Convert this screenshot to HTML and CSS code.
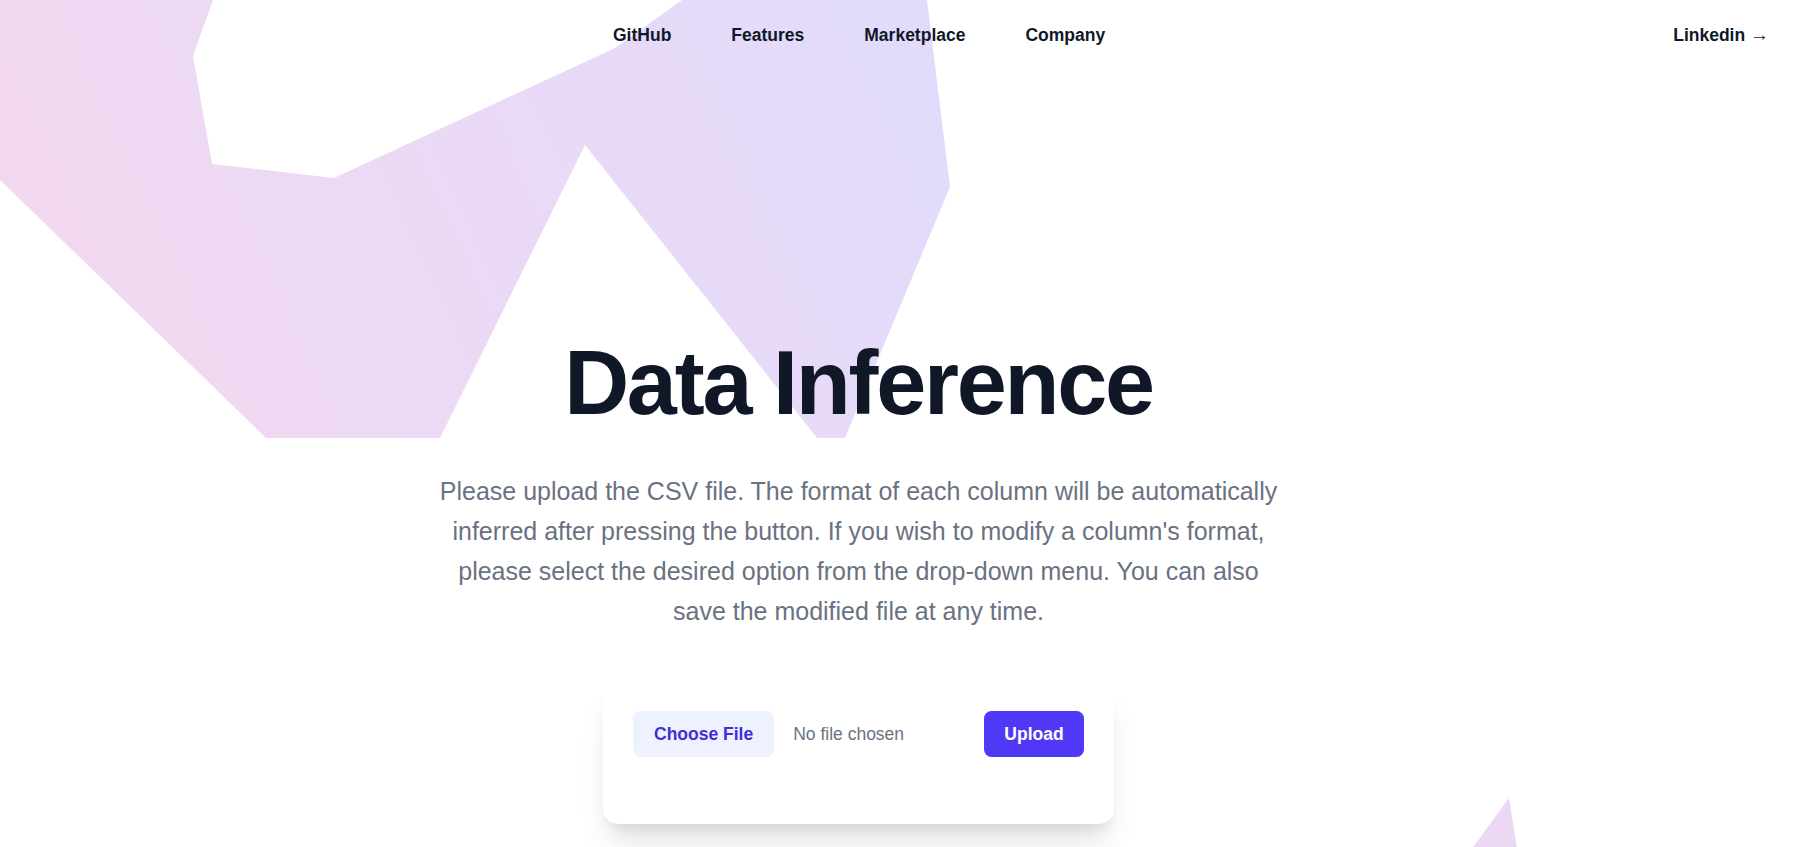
FILE: index.html
```html
<!DOCTYPE html>
<html lang="en">
<head>
<meta charset="utf-8">
<title>Data Inference</title>
<link rel="stylesheet" href="styles.css">
</head>
<body>
<div class="page">
  <svg class="bg" width="1793" height="847" viewBox="0 0 1793 847" aria-hidden="true">
    <defs>
      <linearGradient id="g1" gradientUnits="userSpaceOnUse" x1="0" y1="438" x2="950" y2="0">
        <stop offset="0" stop-color="#f4d8ee"/>
        <stop offset="1" stop-color="#e1dbfc"/>
      </linearGradient>
    </defs>
    <polygon fill="url(#g1)" points="0,0 213,0 193,56 212,164 334,178 615,48 682,0 927,0 950,187 845,438 817,438 585,145 440,438 266,438 0,180"/>
    <polygon fill="#ecd8f2" points="1509,798 1463,861 1519,861"/>
  </svg>

  <header class="nav">
    <nav class="nav-links">
      <a class="nav-link" href="#">GitHub</a>
      <a class="nav-link" href="#">Features</a>
      <a class="nav-link" href="#">Marketplace</a>
      <a class="nav-link" href="#">Company</a>
    </nav>
    <a class="nav-login" href="#">Linkedin <span class="arrow">&rarr;</span></a>
  </header>

  <main class="hero">
    <h1 class="title">Data Inference</h1>
    <p class="lead">Please upload the CSV file. The format of each column will be automatically inferred after pressing the button. If you wish to modify a column's format, please select the desired option from the drop-down menu. You can also save the modified file at any time.</p>
    <div class="card">
      <div class="upload-row">
        <label class="file-input">
          <span class="file-btn">Choose File</span>
          <span class="file-name">No file chosen</span>
        </label>
        <button class="upload-btn" type="button">Upload</button>
      </div>
    </div>
  </main>
</div>
</body>
</html>
```
FILE: styles.css
```css
* { box-sizing: border-box; }

html, body {
  margin: 0;
  padding: 0;
  background: #ffffff;
}

body {
  font-family: "Liberation Sans", Arial, sans-serif;
  color: #101828;
  overflow: hidden;
}

.page {
  position: relative;
  width: 1793px;
  height: 847px;
  overflow: hidden;
}

.bg {
  position: absolute;
  left: 0;
  top: 0;
  z-index: 0;
  display: block;
}

.nav {
  position: relative;
  z-index: 1;
  display: flex;
  align-items: center;
  height: 70px;
  padding: 0 24px 0 613px;
}

.nav-links {
  display: flex;
  gap: 60px;
}

.nav-link,
.nav-login {
  font-size: 17.5px;
  font-weight: 700;
  line-height: 30px;
  color: #101828;
  text-decoration: none;
}

.nav-login {
  margin-left: auto;
}

.arrow {
  font-weight: 400;
  font-family: "Liberation Sans", "DejaVu Sans", sans-serif;
  font-size: 19px;
}

.hero {
  position: relative;
  z-index: 1;
  display: flex;
  flex-direction: column;
  align-items: center;
  margin-right: 76px;
  padding-top: 268px;
}

.title {
  margin: 0;
  font-size: 90px;
  line-height: 90px;
  font-weight: 700;
  letter-spacing: -0.025em;
  color: #101828;
  text-align: center;
}

.lead {
  margin: 43px 0 0;
  max-width: 840px;
  font-size: 25px;
  line-height: 40px;
  color: #6a7282;
  text-align: center;
}

.card {
  margin-top: 50px;
  width: 511px;
  padding: 30px 30px 67px;
  background: #ffffff;
  border-radius: 15px;
  box-shadow: 0 25px 31px -6px rgba(0, 0, 0, 0.1), 0 10px 13px -7px rgba(0, 0, 0, 0.1);
}

.upload-row {
  display: flex;
  align-items: center;
  justify-content: space-between;
}

.file-input {
  display: flex;
  align-items: center;
  gap: 19px;
}

.file-btn {
  display: block;
  padding: 10px 21px;
  font-size: 17.5px;
  line-height: 26px;
  font-weight: 700;
  color: #432dd7;
  background: #eef2ff;
  border-radius: 7.5px;
}

.file-name {
  font-size: 17.5px;
  line-height: 26px;
  color: #6a7282;
}

.upload-btn {
  display: block;
  width: 100px;
  padding: 10px 0;
  border: 0;
  font-family: inherit;
  font-size: 17.5px;
  line-height: 26px;
  font-weight: 700;
  color: #ffffff;
  background: #4f39f6;
  border-radius: 7.5px;
  text-align: center;
}
```
